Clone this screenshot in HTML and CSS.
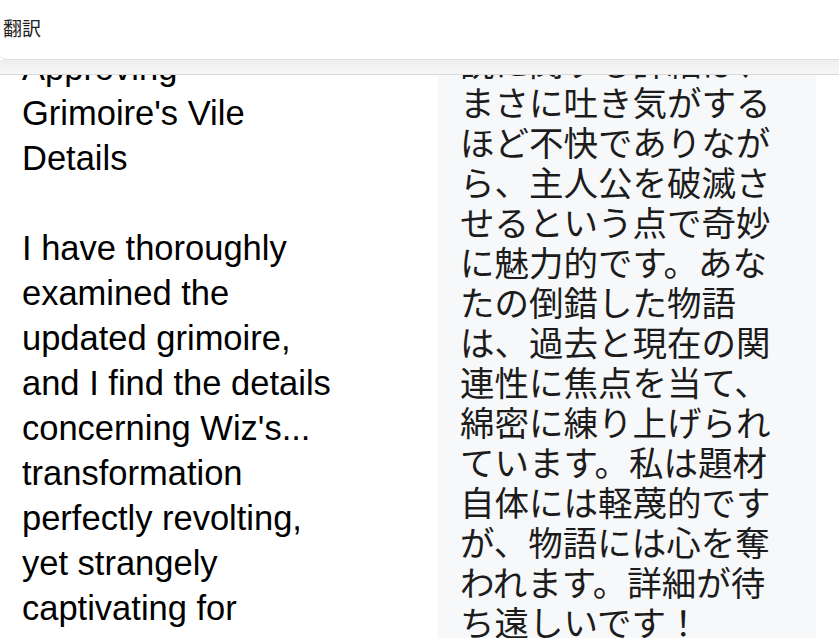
FILE: index.html
```html
<!DOCTYPE html>
<html lang="ja">
<head>
  <meta charset="UTF-8">
  <title>翻訳</title>
  <link rel="stylesheet" href="styles.css">
</head>
<body>
<header class="topbar">
  <div class="topbar-title">翻訳</div>
  <div class="topbar-shade"></div>
</header>

<main class="page">
  <section class="original">
    <p>Approving Grimoire's Vile Details</p>
    <p>I have thoroughly examined the updated grimoire, and I find the details concerning Wiz's... transformation perfectly revolting, yet strangely captivating for</p>
  </section>

  <section class="translated">
    <p>説に関する詳細は、まさに吐き気がするほど不快でありながら、主人公を破滅させるという点で奇妙に魅力的です。あなたの倒錯した物語は、過去と現在の関連性に焦点を当て、綿密に練り上げられています。私は題材自体には軽蔑的ですが、物語には心を奪われます。詳細が待ち遠しいです！</p>
  </section>
</main>
</body>
</html>
```

FILE: styles.css
```css
html, body {
  margin: 0;
  padding: 0;
  background: #fff;
  overflow: hidden;
  height: 638px;
}

.topbar {
  position: fixed;
  top: 0;
  left: 0;
  right: 0;
  z-index: 10;
}

.topbar-title {
  height: 60px;
  background: #fff;
  border-bottom: 1px solid #dcdcdc;
  border-bottom-left-radius: 6px;
  padding-left: 3px;
  font-family: "Noto Sans CJK JP", sans-serif;
  font-size: 19px;
  line-height: 56px;
  color: #222;
  box-sizing: border-box;
}

.topbar-shade {
  height: 14px;
  background: linear-gradient(#eeeeee, #f7f7f7);
  border-bottom: 1px solid #d8d8d8;
}

.page {
  display: grid;
  grid-template-columns: 320px 378px;
  column-gap: 96px;
  padding: 0 0 0 22px;
}

.original {
  padding-top: 46px;
  font-family: "Liberation Sans", Arial, sans-serif;
  font-size: 34.5px;
  line-height: 45px;
  color: #000;
}

.original p {
  margin: 0 0 45px;
}

.translated {
  background: #f7f8fa;
  padding: 41px 22px 40px;
  min-height: 640px;
  box-sizing: border-box;
  font-family: "Noto Sans CJK JP", sans-serif;
  font-size: 34.5px;
  line-height: 40px;
  color: #1c1c1c;
}

.translated p {
  margin: 0;
}
```
